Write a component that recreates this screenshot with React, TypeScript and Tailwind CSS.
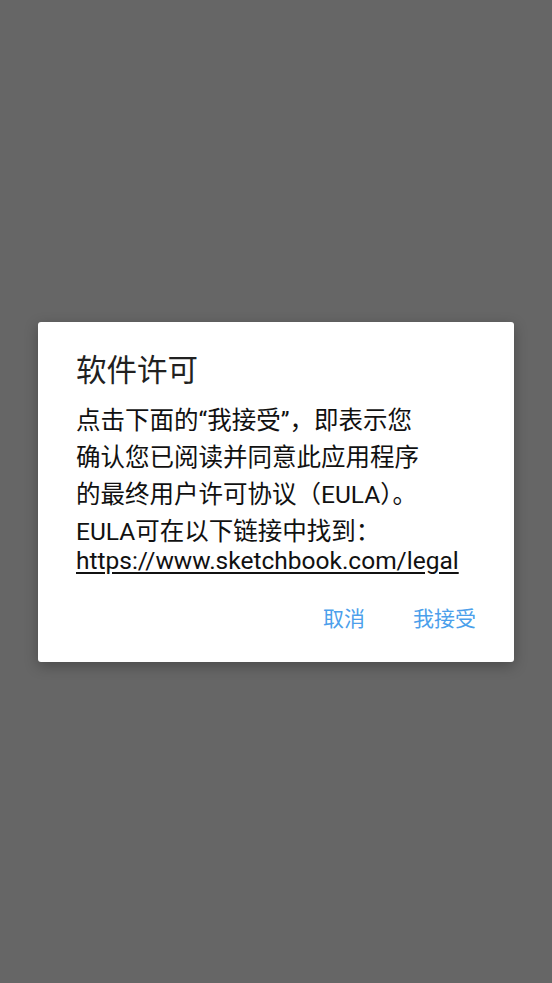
const font = { fontFamily: 'Roboto, "Noto Sans CJK SC", sans-serif' };

export default function App() {
  return (
    <div
      className="flex h-[983px] w-full items-center justify-center bg-[#666666]"
      style={font}
    >
      <div className="flex h-[340px] w-[476px] flex-col rounded-[3px] bg-white px-[38px] pt-[31px] shadow-[0_4px_14px_rgba(0,0,0,0.28)]">
        <h2 className="text-[30.5px] leading-[36px] text-[#212121]">软件许可</h2>
        <div className="mt-[13px] text-[24.5px] text-[#111111]">
          <p className="leading-[37px]">点击下面的“我接受”，即表示您</p>
          <p className="leading-[37px]">确认您已阅读并同意此应用程序</p>
          <p className="leading-[37px]">的最终用户许可协议（EULA）。</p>
          <p className="leading-[37px]">EULA可在以下链接中找到：</p>
          <p className="leading-[22px]">
            <a className="underline underline-offset-[3px]" href="#">
              https://www.sketchbook.com/legal
            </a>
          </p>
        </div>
        <div className="mt-auto mb-[29px] flex justify-end gap-[48px] text-[21px] leading-[28px] text-[#4c9feb]">
          <button type="button">取消</button>
          <button type="button">我接受</button>
        </div>
      </div>
    </div>
  );
}
